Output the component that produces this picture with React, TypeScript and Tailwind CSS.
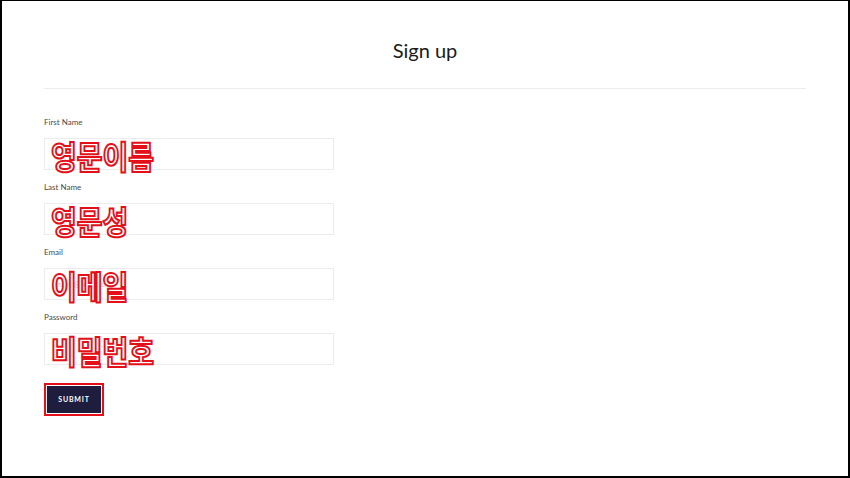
import React from "react";

const fields = [
  { label: "First Name", note: "영문이름" },
  { label: "Last Name", note: "영문성" },
  { label: "Email", note: "이메일", placeholder: "name@email.com" },
  { label: "Password", note: "비밀번호" },
];

function Note({ text }: { text: string }) {
  return (
    <span className="pointer-events-none absolute left-[6px] top-[-1px] origin-top scale-y-[1.12] font-['Noto_Sans_CJK_KR',sans-serif] text-[28px] font-bold leading-[32px] text-white [-webkit-text-stroke:1.8px_#e3101a]">
      {text}
    </span>
  );
}

export default function App() {
  return (
    <div className="h-[478px] w-[850px] overflow-hidden border-t border-r-2 border-b-2 border-l-2 border-black bg-white font-['Lato',sans-serif]">
      <div className="px-[42px]">
        <h1 className="pt-[35px] text-center text-[20px] leading-[28px] text-[#1a1a1a]">
          Sign up
        </h1>
        <div className="mt-[24px] border-t border-[#ececec]" />

        <form className="mt-[27px] flex flex-col" onSubmit={(e) => e.preventDefault()}>
          {fields.map((f) => (
            <div key={f.label} className="mb-[11px] flex flex-col">
              <label className="text-[8px] leading-[12px] text-[#4a4a4a]">{f.label}</label>
              <div className="relative mt-[10px] h-[32px] w-[290px] border border-[#ececec]">
                {f.placeholder && (
                  <span className="absolute left-[12px] top-[10px] text-[7px] leading-[10px] text-[#c4c4c4]">
                    {f.placeholder}
                  </span>
                )}
                <Note text={f.note} />
              </div>
            </div>
          ))}

          <div className="mt-[8px] ml-[3px]">
            <button
              type="submit"
              className="h-[27px] w-[54px] bg-[#1e1d3d] text-[7px] font-bold tracking-[0.8px] text-white outline-2 outline-offset-1 outline-[#e3101a]"
            >
              SUBMIT
            </button>
          </div>
        </form>
      </div>
    </div>
  );
}
